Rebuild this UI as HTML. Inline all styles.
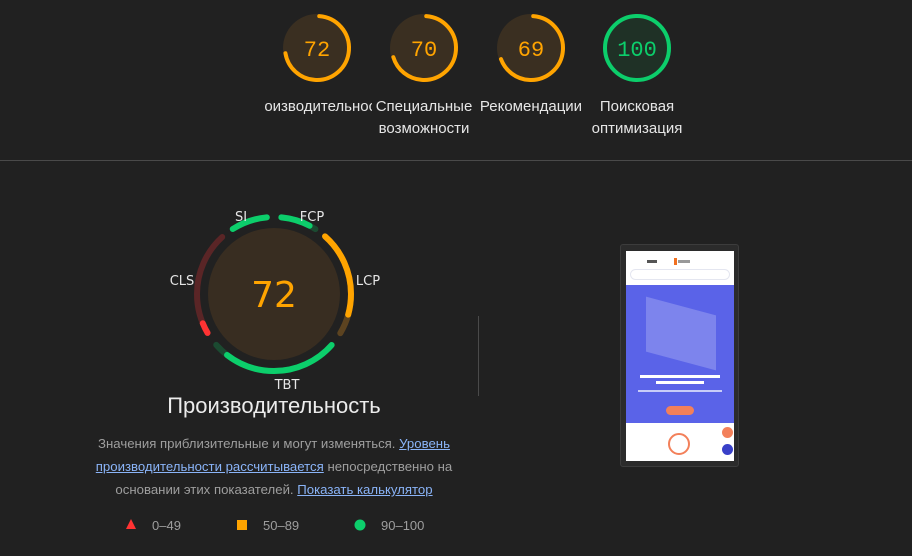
<!DOCTYPE html>
<html><head><meta charset="utf-8"><style>
*{margin:0;padding:0;box-sizing:border-box}
body{width:912px;height:556px;background:#212121;font-family:"Liberation Sans",sans-serif;position:relative;overflow:hidden;color:#e0e0e0}
.abs{position:absolute}
.lbl{position:absolute;font-size:15px;line-height:22px;color:#e6e6e6;text-align:center;white-space:nowrap}
a{color:#8ab4f8;text-decoration:underline}
</style></head><body>

<svg class="abs" style="left:0;top:0" width="912" height="100">
 <g transform="translate(317,48)">
  <circle r="34" fill="#3a2f21"/>
  <circle r="32" fill="none" stroke="#ffa400" stroke-width="4" stroke-linecap="round" stroke-dasharray="143 300" transform="rotate(-86)"/>
  <text y="8" text-anchor="middle" font-family="Liberation Mono,monospace" font-size="22" fill="#ffa400">72</text>
 </g>
 <g transform="translate(424,48)">
  <circle r="34" fill="#3a2f21"/>
  <circle r="32" fill="none" stroke="#ffa400" stroke-width="4" stroke-linecap="round" stroke-dasharray="139 300" transform="rotate(-86)"/>
  <text y="8" text-anchor="middle" font-family="Liberation Mono,monospace" font-size="22" fill="#ffa400">70</text>
 </g>
 <g transform="translate(531,48)">
  <circle r="34" fill="#3a2f21"/>
  <circle r="32" fill="none" stroke="#ffa400" stroke-width="4" stroke-linecap="round" stroke-dasharray="137 300" transform="rotate(-86)"/>
  <text y="8" text-anchor="middle" font-family="Liberation Mono,monospace" font-size="22" fill="#ffa400">69</text>
 </g>
 <g transform="translate(637,48)">
  <circle r="34" fill="#1f3126"/>
  <circle r="32" fill="none" stroke="#0cce6b" stroke-width="4"/>
  <text y="8" text-anchor="middle" font-family="Liberation Mono,monospace" font-size="22" fill="#0cce6b">100</text>
 </g>
</svg>

<div class="abs" style="left:264px;top:94px;width:108px;height:26px;overflow:hidden"><div class="lbl" style="left:50%;top:2px;transform:translateX(-50%)">Производительность</div></div>
<div class="lbl" style="left:372px;top:96px;width:104px">Специальные<br>возможности</div>
<div class="lbl" style="left:476px;top:96px;width:110px">Рекомендации</div>
<div class="lbl" style="left:585px;top:96px;width:104px">Поисковая<br>оптимизация</div>

<div class="abs" style="left:0;top:160px;width:912px;height:1px;background:#4a4a4a"></div>

<svg class="abs" style="left:154px;top:194px" width="240" height="200">
 <g transform="translate(120,100)">
  <circle r="66" fill="#382d21"/>
  <g fill="none" stroke-width="6" stroke-linecap="round" transform="rotate(-90)">
   <circle r="77" stroke="#1b4a31" stroke-dasharray="36.3 500" stroke-dashoffset="-7.4"/>
   <circle r="77" stroke="#0cce6b" stroke-dasharray="29.6 500" stroke-dashoffset="-7.4"/>
   <circle r="77" stroke="#5c4320" stroke-dasharray="106.2 500" stroke-dashoffset="-55.8"/>
   <circle r="77" stroke="#ffa400" stroke-dasharray="86 500" stroke-dashoffset="-55.8"/>
   <circle r="77" stroke="#1b4a31" stroke-dasharray="130.4 500" stroke-dashoffset="-176.7"/>
   <circle r="77" stroke="#0cce6b" stroke-dasharray="115.6 500" stroke-dashoffset="-176.7"/>
   <circle r="77" stroke="#5a2526" stroke-dasharray="104.9 500" stroke-dashoffset="-321.9"/>
   <circle r="77" stroke="#ff3333" stroke-dasharray="10.8 500" stroke-dashoffset="-321.9"/>
   <circle r="77" stroke="#0cce6b" stroke-dasharray="36.3 500" stroke-dashoffset="-440.1"/>
  </g>
  <text y="13" text-anchor="middle" font-family="DejaVu Sans,sans-serif" font-size="36" fill="#ffa400">72</text>
 </g>
 <g font-family="DejaVu Sans,sans-serif" font-size="13" fill="#e6e6e6" text-anchor="middle">
  <text x="87" y="27">SI</text>
  <text x="158" y="27">FCP</text>
  <text x="214" y="91">LCP</text>
  <text x="28" y="91">CLS</text>
  <text x="133" y="195">TBT</text>
 </g>
</svg>

<div class="abs" style="left:74px;top:393px;width:400px;text-align:center;font-size:22px;color:#ececec">Производительность</div>
<div class="abs" style="left:82px;top:432px;width:384px;text-align:center;font-size:13.2px;line-height:23px;color:#9e9e9e">Значения приблизительные и могут изменяться. <a>Уровень производительности рассчитывается</a> непосредственно на основании этих показателей. <a>Показать калькулятор</a></div>

<svg class="abs" style="left:120px;top:515px" width="300" height="22">
 <polygon points="11,4 16,14 6,14" fill="#ff3333"/>
 <rect x="117" y="5" width="10" height="10" fill="#ffa400"/>
 <circle cx="240" cy="10" r="5.5" fill="#0cce6b"/>
</svg>
<div class="abs" style="left:152px;top:518px;font-size:13px;color:#9e9e9e">0–49</div>
<div class="abs" style="left:263px;top:518px;font-size:13px;color:#9e9e9e">50–89</div>
<div class="abs" style="left:381px;top:518px;font-size:13px;color:#9e9e9e">90–100</div>

<div class="abs" style="left:478px;top:316px;width:1px;height:80px;background:#4a4a4a"></div>

<div class="abs" style="left:620px;top:244px;width:119px;height:223px;background:#2b2b2b;border:1px solid #3c3c3c;border-radius:3px"></div>
<div class="abs" style="left:626px;top:251px;width:108px;height:210px;background:#fff;overflow:hidden">
 <div class="abs" style="left:21px;top:9px;width:10px;height:3px;background:#555"></div>
 <div class="abs" style="left:48px;top:7px;width:3px;height:7px;background:#f07020"></div>
 <div class="abs" style="left:52px;top:9px;width:12px;height:3px;background:#999"></div>
 <div class="abs" style="left:4px;top:18px;width:100px;height:11px;border:1px solid #e4e6f0;border-radius:6px"></div>
 <div class="abs" style="left:0;top:34px;width:108px;height:138px;background:#5a63e8"></div>
 <div class="abs" style="left:20px;top:55px;width:70px;height:55px;background:#8c93f0;opacity:.7;transform:skewY(15deg)"></div>
 <div class="abs" style="left:14px;top:124px;width:80px;height:3px;background:#fff"></div>
 <div class="abs" style="left:30px;top:130px;width:48px;height:3px;background:#fff"></div>
 <div class="abs" style="left:12px;top:139px;width:84px;height:2px;background:#c8ccf8"></div>
 <div class="abs" style="left:40px;top:155px;width:28px;height:9px;border-radius:5px;background:#f3805a"></div>
 <div class="abs" style="left:42px;top:182px;width:22px;height:22px;border-radius:50%;border:2px solid #f3805a"></div>
 <div class="abs" style="left:96px;top:176px;width:11px;height:11px;border-radius:50%;background:#f3805a"></div>
 <div class="abs" style="left:96px;top:193px;width:11px;height:11px;border-radius:50%;background:#3940c8"></div>
</div>
</body></html>
